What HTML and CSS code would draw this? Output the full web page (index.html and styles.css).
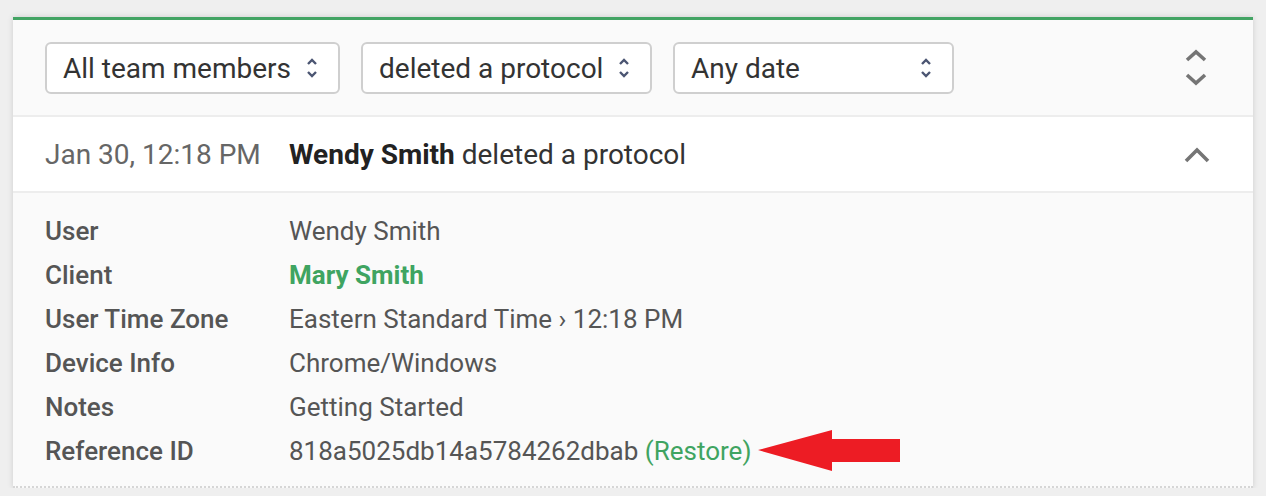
FILE: index.html
```html
<!DOCTYPE html>
<html lang="en">
<head>
<meta charset="utf-8">
<title>Activity log</title>
<link rel="stylesheet" href="styles.css">
</head>
<body>
<div class="card">
  <div class="filters">
    <div class="select select--members"><span>All team members</span>
      <svg class="select-icon" width="12" height="22" viewBox="0 0 12 22"><polyline points="2,7 6,3 10,7"/><polyline points="2,15 6,19 10,15"/></svg>
    </div>
    <div class="select select--action"><span>deleted a protocol</span>
      <svg class="select-icon" width="12" height="22" viewBox="0 0 12 22"><polyline points="2,7 6,3 10,7"/><polyline points="2,15 6,19 10,15"/></svg>
    </div>
    <div class="select select--date"><span>Any date</span>
      <svg class="select-icon" width="12" height="22" viewBox="0 0 12 22"><polyline points="2,7 6,3 10,7"/><polyline points="2,15 6,19 10,15"/></svg>
    </div>
    <svg class="expand-all" width="22" height="38" viewBox="0 0 22 38"><polyline points="2,11 11,3 20,11"/><polyline points="2,26 11,34 20,26"/></svg>
  </div>
  <div class="entry-head">
    <span class="entry-date">Jan 30, 12:18 PM</span>
    <span class="entry-title"><strong>Wendy Smith</strong> deleted a protocol</span>
    <svg class="collapse" width="26" height="16" viewBox="0 0 26 16"><polyline points="2,14 13,3 24,14"/></svg>
  </div>
  <div class="details">
    <div class="label">User</div><div class="value">Wendy Smith</div>
    <div class="label">Client</div><div class="value"><span class="client">Mary Smith</span></div>
    <div class="label">User Time Zone</div><div class="value">Eastern Standard Time › 12:18 PM</div>
    <div class="label">Device Info</div><div class="value">Chrome/Windows</div>
    <div class="label">Notes</div><div class="value">Getting Started</div>
    <div class="label">Reference ID</div><div class="value">818a5025db14a5784262dbab <span class="restore">(Restore)</span><svg class="arrow" width="143" height="42" viewBox="0 0 143 42"><polygon points="0,20 74,0 74,9 142,9 142,32 74,32 74,41"/></svg></div>
  </div>
</div>
</body>
</html>
```

FILE: styles.css
```css
* { box-sizing: border-box; }
html, body { margin: 0; }
body {
  background: #efefef;
  padding: 17px 13px 0 13px;
  font-family: Roboto, "Liberation Sans", sans-serif;
  font-size: 28px;
  color: #333;
}
.card {
  background: #fff;
  border-top: 3px solid #43a464;
  box-shadow: 0 0 6px rgba(0,0,0,0.14);
}
.filters {
  background: #fafafa;
  display: flex;
  align-items: center;
  gap: 21px;
  padding: 22px 46px 21px 32px;
  border-bottom: 2px solid #ededed;
}
.select {
  height: 52px;
  display: flex;
  align-items: center;
  justify-content: space-between;
  padding: 0 20px 0 16px;
  border: 2px solid #cfcfcf;
  border-radius: 6px;
  background: #fff;
  color: #333;
  white-space: nowrap;
}
.select--members { width: 295px; }
.select--action { width: 291px; }
.select--date { width: 281px; }
.select-icon polyline {
  fill: none;
  stroke: #4b5572;
  stroke-width: 2.4;
}
.expand-all { margin-left: auto; }
.expand-all polyline, .collapse polyline {
  fill: none;
  stroke: #757575;
  stroke-width: 3.6;
}
.entry-head {
  height: 76px;
  display: flex;
  align-items: center;
  padding: 1px 43px 0 32px;
  border-bottom: 2px solid #ededed;
  background: #fff;
}
.entry-date { width: 244px; color: #666; }
.entry-title { color: #333; flex: 1; }
.entry-title strong { color: #222; font-weight: 700; }
.details {
  background: #fafafa;
  display: grid;
  grid-template-columns: 244px 1fr;
  font-size: 26px;
  line-height: 44px;
  padding: 16px 32px 13px 32px;
  border-bottom: 2px dotted #d6d6d6;
}
.label { color: #555; font-weight: 500; }
.value { color: #555; display: flex; align-items: center; white-space: pre; }
.client { color: #3fa461; font-weight: 700; }
.restore { color: #3fa461; }
.arrow { margin-left: 7px; }
.arrow polygon { fill: #ed1c24; }
```
